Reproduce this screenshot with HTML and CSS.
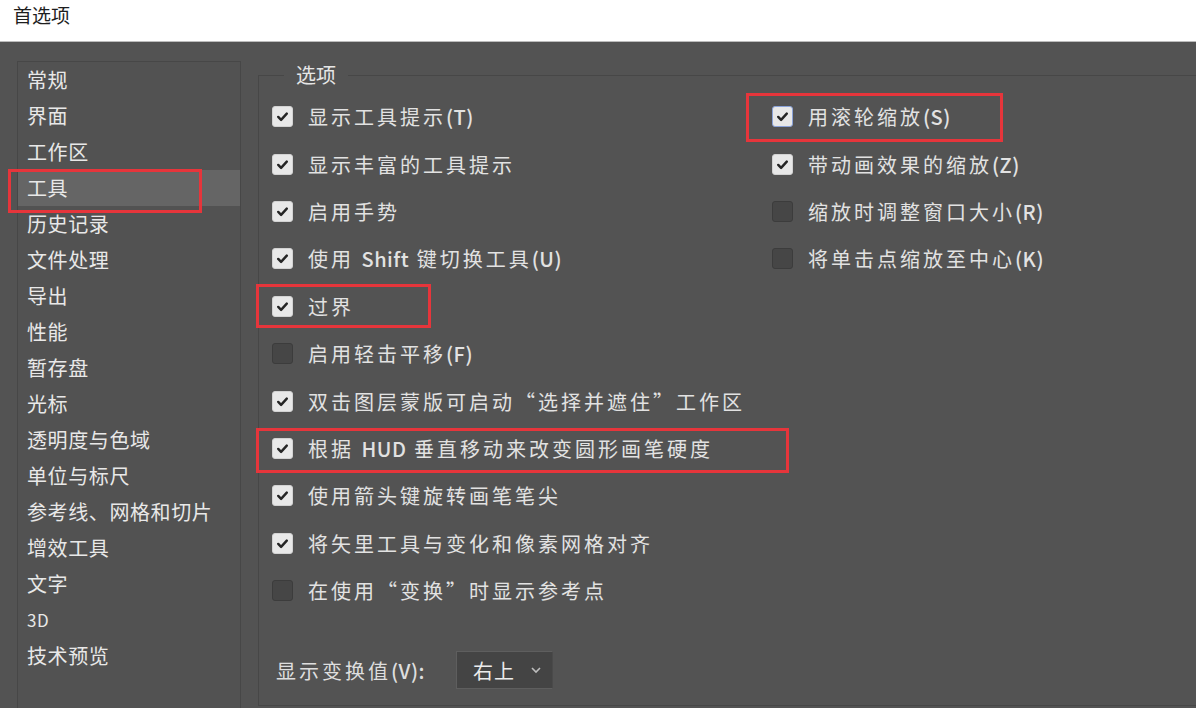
FILE: index.html
```html
<!DOCTYPE html>
<html lang="zh-CN">
<head>
<meta charset="utf-8">
<title>首选项</title>
<link rel="stylesheet" href="styles.css">
</head>
<body>
<header class="titlebar">首选项</header>
<main class="dialog">
  <nav class="sidebar">
    <div class="nav-item">常规</div>
    <div class="nav-item">界面</div>
    <div class="nav-item">工作区</div>
    <div class="nav-item active">工具<span class="mark mark-nav"></span></div>
    <div class="nav-item">历史记录</div>
    <div class="nav-item">文件处理</div>
    <div class="nav-item">导出</div>
    <div class="nav-item">性能</div>
    <div class="nav-item">暂存盘</div>
    <div class="nav-item">光标</div>
    <div class="nav-item">透明度与色域</div>
    <div class="nav-item">单位与标尺</div>
    <div class="nav-item">参考线、网格和切片</div>
    <div class="nav-item">增效工具</div>
    <div class="nav-item">文字</div>
    <div class="nav-item latin">3D</div>
    <div class="nav-item">技术预览</div>
  </nav>
  <fieldset class="options">
    <legend class="legend">选项</legend>
    <div class="cols">
      <div class="col">
        <div class="row"><span class="cb on"><svg viewBox="0 0 20 20"><path d="M5.5 10.5l3 3 6-6.5"/></svg></span><span class="lbl">显示工具提示<span class="key">(T)</span></span></div>
        <div class="row"><span class="cb on"><svg viewBox="0 0 20 20"><path d="M5.5 10.5l3 3 6-6.5"/></svg></span><span class="lbl">显示丰富的工具提示</span></div>
        <div class="row"><span class="cb on"><svg viewBox="0 0 20 20"><path d="M5.5 10.5l3 3 6-6.5"/></svg></span><span class="lbl">启用手势</span></div>
        <div class="row"><span class="cb on"><svg viewBox="0 0 20 20"><path d="M5.5 10.5l3 3 6-6.5"/></svg></span><span class="lbl">使用 <span class="key">Shift</span> 键切换工具<span class="key">(U)</span></span></div>
        <div class="row"><span class="cb on"><svg viewBox="0 0 20 20"><path d="M5.5 10.5l3 3 6-6.5"/></svg></span><span class="lbl">过界</span><span class="mark mark-guojie"></span></div>
        <div class="row"><span class="cb"></span><span class="lbl">启用轻击平移<span class="key">(F)</span></span></div>
        <div class="row"><span class="cb on"><svg viewBox="0 0 20 20"><path d="M5.5 10.5l3 3 6-6.5"/></svg></span><span class="lbl">双击图层蒙版可启动“选择并遮住”工作区</span></div>
        <div class="row"><span class="cb on"><svg viewBox="0 0 20 20"><path d="M5.5 10.5l3 3 6-6.5"/></svg></span><span class="lbl">根据 <span class="key">HUD</span> 垂直移动来改变圆形画笔硬度</span><span class="mark mark-hud"></span></div>
        <div class="row"><span class="cb on"><svg viewBox="0 0 20 20"><path d="M5.5 10.5l3 3 6-6.5"/></svg></span><span class="lbl">使用箭头键旋转画笔笔尖</span></div>
        <div class="row"><span class="cb on"><svg viewBox="0 0 20 20"><path d="M5.5 10.5l3 3 6-6.5"/></svg></span><span class="lbl">将矢里工具与变化和像素网格对齐</span></div>
        <div class="row"><span class="cb"></span><span class="lbl">在使用“变换”时显示参考点</span></div>
      </div>
      <div class="col">
        <div class="row"><span class="cb on focus"><svg viewBox="0 0 20 20"><path d="M5.5 10.5l3 3 6-6.5"/></svg></span><span class="lbl">用滚轮缩放<span class="key">(S)</span></span><span class="mark mark-wheel"></span></div>
        <div class="row"><span class="cb on"><svg viewBox="0 0 20 20"><path d="M5.5 10.5l3 3 6-6.5"/></svg></span><span class="lbl">带动画效果的缩放<span class="key">(Z)</span></span></div>
        <div class="row"><span class="cb"></span><span class="lbl">缩放时调整窗口大小<span class="key">(R)</span></span></div>
        <div class="row"><span class="cb"></span><span class="lbl">将单击点缩放至中心<span class="key">(K)</span></span></div>
      </div>
    </div>
    <div class="transform">
      <span class="tlabel">显示变换值<span class="key">(V):</span></span>
      <span class="select">右上<svg class="chev" viewBox="0 0 12 8"><path d="M2 2l4 4 4-4"/></svg></span>
    </div>
  </fieldset>
</main>
</body>
</html>
```

FILE: styles.css
```css
html, body {
  margin: 0;
  padding: 0;
}
body {
  width: 1196px;
  height: 708px;
  overflow: hidden;
  background: #535353;
  font-family: "Noto Sans CJK SC", "Microsoft YaHei", sans-serif;
}
.titlebar {
  height: 42px;
  background: #ffffff;
  border-bottom: 1px solid #bcbcbc;
  box-sizing: border-box;
  padding-left: 13px;
  font-size: 19px;
  line-height: 30px;
  color: #1e1e1e;
}
.dialog {
  display: flex;
  padding: 19px 0 0 17px;
  height: 666px;
  box-sizing: border-box;
}
.sidebar {
  width: 224px;
  flex: none;
  border: 1px solid #474747;
  border-bottom: none;
  box-sizing: border-box;
  background: #525252;
  height: 660px;
}
.nav-item {
  position: relative;
  height: 36px;
  line-height: 36px;
  padding-left: 9px;
  font-size: 20px;
  letter-spacing: 0.6px;
  color: #e8e8e8;
  white-space: nowrap;
}
.nav-item.latin {
  font-size: 17px;
}
.nav-item.active {
  background: #656565;
}
.mark {
  position: absolute;
  border: 3px solid #e6353b;
  box-sizing: border-box;
  pointer-events: none;
}
.mark-nav {
  left: -10px;
  top: -1px;
  width: 194px;
  height: 44px;
}
.options {
  margin: 0 0 0 17px;
  padding: 0 0 0 13px;
  border: 1px solid #474747;
  border-right: none;
  flex: 1;
  min-width: 0;
  height: 645px;
  box-sizing: border-box;
}
.legend {
  margin-left: 12px;
  padding: 0 12px 0 12px;
  font-size: 20px;
  line-height: 28px;
  color: #e6e6e6;
}
.cols {
  display: grid;
  grid-template-columns: 500px 1fr;
  padding-top: 4px;
}
.row {
  position: relative;
  display: flex;
  align-items: center;
  height: 47.4px;
}
.cb {
  width: 21px;
  height: 21px;
  border-radius: 3px;
  box-sizing: border-box;
  background: #464646;
  border: 1px solid #3c3c3c;
  flex: none;
  display: flex;
}
.cb.on {
  background: #e8e8e8;
  border-color: #d2d2d2;
}
.cb.focus {
  border: 1px solid #8aa2d8;
}
.cb svg {
  width: 100%;
  height: 100%;
}
.cb path {
  fill: none;
  stroke: #252525;
  stroke-width: 2.6;
  stroke-linecap: round;
  stroke-linejoin: round;
}
.lbl {
  margin-left: 15px;
  font-size: 20px;
  letter-spacing: 3px;
  color: #e2e2e2;
  white-space: nowrap;
}
.key {
  letter-spacing: 0.5px;
  font-weight: 500;
}
.mark-guojie {
  left: -16px;
  top: 1px;
  width: 175px;
  height: 44px;
}
.mark-hud {
  left: -16px;
  top: 3px;
  width: 533px;
  height: 45px;
}
.mark-wheel {
  left: -26px;
  top: 0;
  width: 257px;
  height: 49px;
}
.transform {
  display: flex;
  align-items: center;
  margin-top: 37px;
  padding-left: 4px;
}
.tlabel {
  font-size: 20px;
  letter-spacing: 3px;
  color: #dedede;
  width: 180px;
}
.select {
  display: flex;
  align-items: center;
  width: 97px;
  height: 38px;
  box-sizing: border-box;
  background: #444444;
  border: 1px solid #5e5e5e;
  border-right-color: #4a4a4a;
  padding-left: 16px;
  font-size: 20px;
  letter-spacing: 1px;
  color: #ececec;
}
.chev {
  width: 12px;
  height: 8px;
  margin-left: 15px;
}
.chev path {
  fill: none;
  stroke: #bdbdbd;
  stroke-width: 1.6;
}
```
